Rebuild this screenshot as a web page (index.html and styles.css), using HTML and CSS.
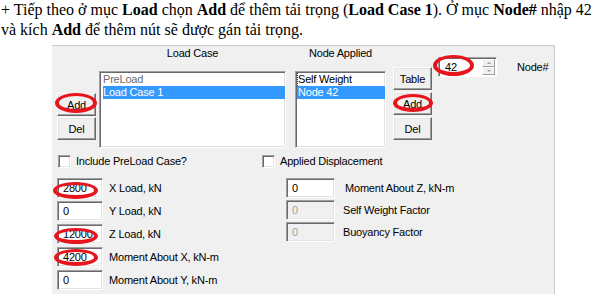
FILE: index.html
```html
<!DOCTYPE html>
<html lang="vi">
<head>
<meta charset="utf-8">
<title>Load</title>
<link rel="stylesheet" href="styles.css">
</head>
<body>
<p class="intro">+ Tiếp theo ở mục <b>Load</b> chọn <b>Add</b> để thêm tải trọng (<b>Load Case 1</b>). Ở mục <b>Node#</b> nhập 42<br>và kích <b>Add</b> để thêm nút sẽ được gán tải trọng.</p>
<div class="dialog">
  <div class="top">
    <div class="btncol btncol-left">
      <div class="btn circled circ-addl">Add</div>
      <div class="btn">Del</div>
    </div>
    <div class="group group-load">
      <div class="glabel">Load Case</div>
      <div class="list list-load">
        <div class="item item-dim">PreLoad</div>
        <div class="item item-sel">Load Case 1</div>
      </div>
    </div>
    <div class="group group-node">
      <div class="glabel">Node Applied</div>
      <div class="list list-node">
        <div class="item item-focus">Self Weight</div>
        <div class="item item-sel">Node 42</div>
      </div>
    </div>
    <div class="btncol btncol-right">
      <div class="btn">Table</div>
      <div class="btn circled circ-addr">Add</div>
      <div class="btn">Del</div>
    </div>
    <div class="spin circled circ-spin">
      <div class="spin-val">42</div>
      <div class="spin-btns">
        <div class="spin-btn"><span class="tri tri-up"></span></div>
        <div class="spin-btn"><span class="tri tri-down"></span></div>
      </div>
    </div>
    <div class="nodelabel">Node#</div>
  </div>
  <div class="checks">
    <div class="check"><span class="box"></span><span>Include PreLoad Case?</span></div>
    <div class="check"><span class="box"></span><span>Applied Displacement</span></div>
  </div>
  <div class="fields">
    <div class="fcol fcol-left">
      <div class="frow"><div class="field circled circ-x">2800</div><span class="flabel">X Load, kN</span></div>
      <div class="frow"><div class="field">0</div><span class="flabel">Y Load, kN</span></div>
      <div class="frow"><div class="field circled circ-z">12000</div><span class="flabel">Z Load, kN</span></div>
      <div class="frow"><div class="field circled circ-mx">4200</div><span class="flabel">Moment About X, kN-m</span></div>
      <div class="frow"><div class="field">0</div><span class="flabel">Moment About Y, kN-m</span></div>
    </div>
    <div class="fcol fcol-right">
      <div class="frow"><div class="field field-wide">0</div><span class="flabel flabel-z">Moment About Z, kN-m</span></div>
      <div class="frow"><div class="field field-wide field-off">0</div><span class="flabel">Self Weight Factor</span></div>
      <div class="frow"><div class="field field-wide field-off">0</div><span class="flabel">Buoyancy Factor</span></div>
    </div>
  </div>
</div>
</body>
</html>
```
FILE: styles.css
```css
body {
  margin: 0;
  background: #fff;
  font-family: "Liberation Sans", Arial, sans-serif;
}

.intro {
  margin: 0;
  padding-left: 1px;
  font-family: "Liberation Serif", "Times New Roman", serif;
  font-size: 16px;
  line-height: 20px;
  color: #000;
}

.dialog {
  margin: 5px 0 0 52px;
  width: 502px;
  height: 248px;
  background: #f0f0f0;
  border-top: 1px solid #c6cbd3;
  border-right: 1px solid #c6cbd3;
  font-size: 11px;
  letter-spacing: -0.2px;
  color: #000;
}

.top {
  display: flex;
  align-items: flex-start;
  padding-left: 5px;
}

.btncol {
  display: flex;
  flex-direction: column;
  width: 39px;
}

.btncol-left {
  margin-top: 47px;
  gap: 1px;
}

.btncol-right {
  margin-left: 7px;
  margin-top: 21px;
  gap: 2px;
}

.btn {
  height: 23px;
  box-sizing: border-box;
  display: flex;
  align-items: center;
  justify-content: center;
  background: #f0f0f0;
  border: 1px solid;
  border-color: #fff #696969 #696969 #fff;
  box-shadow: inset -1px -1px #a0a0a0, inset 1px 1px #e3e3e3;
}

.group-load {
  margin-left: 3px;
  width: 187px;
}

.group-node {
  margin-left: 9px;
  width: 91px;
}

.glabel {
  height: 25px;
  line-height: 14px;
  text-align: center;
}

.list {
  height: 77px;
  box-sizing: border-box;
  background: #fff;
  border: 1px solid;
  border-color: #a0a0a0 #fff #fff #a0a0a0;
  box-shadow: inset 1px 1px #696969, inset -1px -1px #e3e3e3;
  padding: 1px 0 0 3px;
}

.list-node {
  padding-left: 1px;
}

.item {
  height: 13px;
  line-height: 13px;
  white-space: nowrap;
}

.list-node .item {
  padding-left: 1px;
}

.item-dim {
  color: #6d6d6d;
}

.item-sel {
  background: #3399ff;
  color: #fff;
}

.list-node .item-focus {
  padding-left: 0;
  border-left: 1px dotted #333;
}

.spin {
  margin-left: 6px;
  margin-top: 11px;
  width: 59px;
  height: 20px;
  box-sizing: border-box;
  display: flex;
  background: #fff;
  border: 1px solid;
  border-color: #a0a0a0 #fff #fff #a0a0a0;
  box-shadow: inset 1px 1px #696969;
  padding: 1px 1px 0 1px;
}

.spin-val {
  flex: 1;
  padding-left: 5px;
  line-height: 16px;
}

.spin-btns {
  width: 13px;
  display: flex;
  flex-direction: column;
}

.spin-btn {
  height: 8px;
  box-sizing: border-box;
  display: flex;
  align-items: center;
  justify-content: center;
  background: #f0f0f0;
  border: 1px solid;
  border-color: #fff #a0a0a0 #a0a0a0 #fff;
}

.tri {
  width: 0;
  height: 0;
  border-left: 2px solid transparent;
  border-right: 2px solid transparent;
}

.tri-up {
  border-bottom: 2px solid #a0a0a0;
}

.tri-down {
  border-top: 2px solid #a0a0a0;
}

.nodelabel {
  margin-left: 20px;
  margin-top: 14px;
  line-height: 14px;
}

.checks {
  display: grid;
  grid-template-columns: 204px auto;
  padding-left: 6px;
  margin-top: 6px;
  height: 14px;
}

.check {
  display: flex;
  align-items: center;
  gap: 5px;
  line-height: 14px;
}

.box {
  width: 13px;
  height: 13px;
  box-sizing: border-box;
  background: #fff;
  border: 1px solid;
  border-color: #a0a0a0 #fff #fff #a0a0a0;
  box-shadow: inset 1px 1px #696969, inset -1px -1px #e3e3e3;
}

.fields {
  display: grid;
  grid-template-columns: 229px auto;
  padding-left: 5px;
  margin-top: 10px;
}

.fcol {
  display: flex;
  flex-direction: column;
  gap: 3px;
}

.fcol-right {
  gap: 2px;
}

.frow {
  display: flex;
  align-items: center;
  height: 20px;
  gap: 6px;
}

.fcol-right .frow {
  gap: 8px;
}

.field {
  width: 46px;
  height: 20px;
  box-sizing: border-box;
  background: #fff;
  border: 1px solid;
  border-color: #a0a0a0 #fff #fff #a0a0a0;
  box-shadow: inset 1px 1px #696969, inset -1px -1px #e3e3e3;
  padding-left: 5px;
  line-height: 18px;
  white-space: nowrap;
}

.field-wide {
  width: 49px;
}

.field-off {
  background: #f0f0f0;
  color: #a0a0a0;
}

.flabel {
  white-space: nowrap;
  line-height: 14px;
}

.flabel-z {
  margin-left: 2px;
}

.circled {
  position: relative;
}

.circled::after {
  content: "";
  position: absolute;
  border: 4px solid #e8141c;
  border-top-width: 3px;
  border-radius: 50%;
  pointer-events: none;
}

.circ-addl::after { inset: -1px -2px 2px -3px; }
.circ-addr::after { inset: 1px -2px 2px -1px; }
.circ-spin::after { inset: -3px 22px 0 -6px; }
.circ-x::after { inset: 3px 4px -2px -5px; }
.circ-z::after { inset: 3px 4px -1px -4px; }
.circ-mx::after { inset: 1px 4px 0 -4px; }
```
